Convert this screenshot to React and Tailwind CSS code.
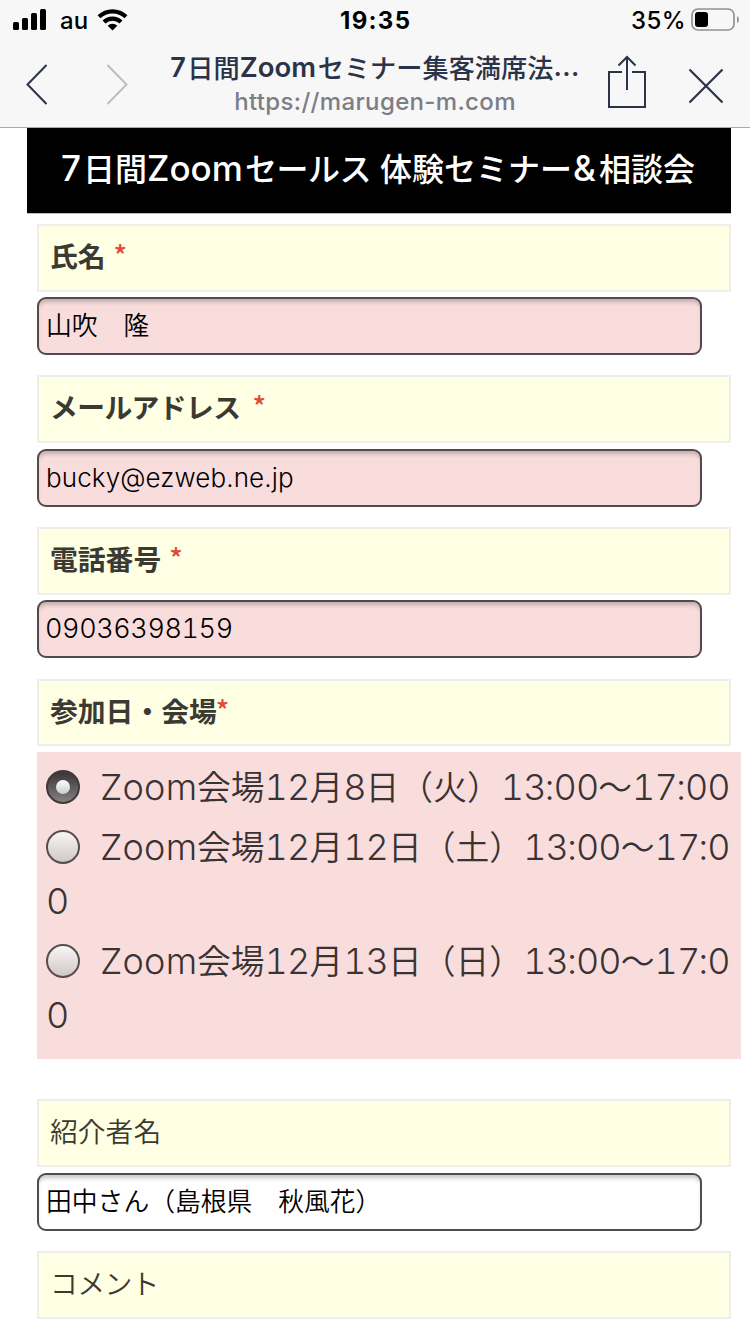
import React from "react";

const JP = "font-['Noto_Sans_CJK_JP',sans-serif]";
const LATIN = "font-['Inter','Noto_Sans_CJK_JP',sans-serif]";

function StatusBar() {
  return (
    <div className={`flex h-10 items-center ${LATIN} text-black`}>
      <svg className="ml-3 h-[22px] w-[36px] shrink-0" viewBox="0 0 36 22">
        <rect x="1" y="13" width="6" height="8" rx="1.5" />
        <rect x="10" y="9" width="6" height="12" rx="1.5" />
        <rect x="19" y="4" width="6" height="17" rx="1.5" />
        <rect x="28" y="0" width="6" height="21" rx="1.5" />
      </svg>
      <span className="ml-[12px] w-[37px] pt-px text-[24px] leading-none font-medium">au</span>
      <svg className="h-[24px] w-[31px] shrink-0" viewBox="0 0 31 24" fill="none" stroke="#000" strokeWidth="4.2">
        <path d="M2 8.8A19.5 19.5 0 0 1 29 8.8" />
        <path d="M7 14A12.3 12.3 0 0 1 24 14" />
        <path d="M15.500 22.500l-4.800-4.800a6.800 6.800 0 0 1 9.600 0z" fill="#000" stroke="none" />
      </svg>
      <span className="ml-[212px] w-[71px] pt-[2px] text-[24px] leading-none font-bold tracking-[1.3px] whitespace-nowrap">19:35</span>
      <span className="ml-[220px] w-[54px] pt-[2px] text-[24px] leading-none font-medium tracking-[0.4px] whitespace-nowrap">35%</span>
      <svg className="ml-[6px] h-[24px] w-[49px] shrink-0" viewBox="0 0 49 24">
        <rect x="1" y="1" width="42" height="21" rx="6" fill="none" stroke="#929292" strokeWidth="1.700" />
        <rect x="4" y="4" width="13" height="15" rx="3" />
        <path d="M46 8q2 1 2 3.500t-2 3.500z" fill="#929292" />
      </svg>
    </div>
  );
}

function NavBar() {
  return (
    <div className="flex h-[87px] items-start">
      <svg className="mt-[22px] ml-[25px] h-[45px] w-[24px]" viewBox="0 0 24 45" fill="none" stroke="#2b3348" strokeWidth="2">
        <path d="M21.500 3L2.500 22.500L21.500 42" />
      </svg>
      <svg className="mt-[22px] ml-[56px] h-[45px] w-[24px]" viewBox="0 0 24 45" fill="none" stroke="#bdbec3" strokeWidth="2">
        <path d="M2.500 3L21.500 22.500L2.500 42" />
      </svg>
      <div className="ml-[40px] flex w-[412px] flex-col items-center pt-[10px] whitespace-nowrap">
        <div className={`flex h-[34px] items-center text-[26.2px] leading-none font-medium text-[#2b3348] ${JP}`}>
          <span className={`${LATIN} w-[17px] pt-px text-[27px] font-semibold`}>7</span>日間
          <span className={`${LATIN} w-[78px] pt-px text-[27.5px] font-semibold`}>Zoom</span>セミナー集客満席法
          <span className={`${LATIN} pt-px font-semibold tracking-[0.4px]`}>...</span>
        </div>
        <div className={`flex h-[36px] items-center text-[24px] leading-none font-medium tracking-[0.35px] text-[#7c7e85] ${LATIN}`}>
          https://marugen-m.com
        </div>
      </div>
      <svg className="mt-[15px] ml-[26px] h-[56px] w-[40px]" viewBox="0 0 40 56" fill="none" stroke="#2b3348" strokeWidth="2">
        <path d="M15 17H2V52H38V17H25M20 35V2M11.500 10.500L20 2L28.500 10.500" />
      </svg>
      <svg className="mt-[28px] ml-[41px] h-[36px] w-[36px]" viewBox="0 0 36 36" fill="none" stroke="#2b3348" strokeWidth="2.200">
        <path d="M1.500 1.500L34.500 34.500M34.500 1.500L1.500 34.500" />
      </svg>
    </div>
  );
}

function Label({ children, className = "" }) {
  return (
    <div className={`ml-[37px] flex w-[694px] shrink-0 items-center border-2 border-[#eeeeee] bg-[#ffffe3] pb-[4px] pl-[11px] text-[27.800px] leading-none whitespace-nowrap text-[#3a3a32] ${JP} ${className}`}>
      {children}
    </div>
  );
}

function Star({ className = "" }) {
  return <span className={`${JP} pb-[2px] font-medium tracking-normal text-[#e04a38] ${className}`}>*</span>;
}

function Field({ children, className = "" }) {
  return (
    <div className={`ml-[37px] flex h-[58px] w-[665px] shrink-0 items-center rounded-[9px] border-2 border-[#524a4c] pb-[4px] pl-[7px] text-[25.8px] leading-none font-[350] whitespace-pre text-black shadow-[inset_0_5px_4px_-2px_rgba(0,0,0,0.22)] ${JP} ${className}`}>
      {children}
    </div>
  );
}

function Radio({ checked }) {
  return checked ? (
    <span className="flex size-[34px] shrink-0 items-center justify-center rounded-full border-2 border-[#403a3b] bg-gradient-to-b from-[#3a3637] to-[#858182]">
      <span className="size-[14px] rounded-full bg-gradient-to-b from-white to-[#cccccc]" />
    </span>
  ) : (
    <span className="size-[34px] shrink-0 rounded-full border-2 border-[#554d4e] bg-gradient-to-b from-[#faf6f6] to-[#d0c7c8]" />
  );
}

function Run({ className = "", children }) {
  return <span className={`inline-block ${LATIN} text-[36px] font-[330] ${className}`}>{children}</span>;
}

function Digits({ value }) {
  return value.split("").map((c, i) => (
    <Run key={i} className={c === ":" ? "w-[8px] text-center indent-[-1px]" : "w-[22.4px] text-center tabular-nums"}>
      {c}
    </Run>
  ));
}

function Option({ day, week, end, rest, checked, className = "" }) {
  return (
    <div className={className}>
      <div className="flex h-[54px] items-center">
        <Radio checked={checked} />
        <span className="ml-[20px] flex items-baseline pb-px whitespace-nowrap">
          <Run className="w-[97px] tracking-[0.2px]">Zoom</Run>会場
          <Digits value="12" />月
          <Digits value={day} />日（{week}）
          <Digits value="13:00" />～
          <Digits value={end} />
        </span>
      </div>
      {rest && (
        <div className="flex h-[54px] items-center pb-px">
          <Digits value={rest} />
        </div>
      )}
    </div>
  );
}

export default function App() {
  return (
    <div lang="ja" className="flex h-[1334px] w-[750px] flex-col overflow-hidden bg-white">
      <header className="h-[128px] shrink-0 border-b border-[#a9a9a9] bg-[#f7f7f7]">
        <StatusBar />
        <NavBar />
      </header>

      <h1 className={`ml-[27px] flex h-[86px] w-[704px] shrink-0 items-center border-b border-[#bbbbbb] bg-black pb-[4px] pl-[34px] text-[32px] leading-none font-medium whitespace-pre text-white ${JP}`}>
        <span className="flex items-baseline">
          <span className={`${LATIN} w-[22px] text-[35px]`}>7</span>日間
          <span className={`${LATIN} w-[98px] text-[35px]`}>Zoom</span>
          <span className="tracking-[-0.5px]">セールス</span>
          <span className="ml-[9px]">体験セミナー</span>
          <span className={`${LATIN} w-[27px] pl-px text-[35px]`}>&amp;</span>相談会
        </span>
      </h1>

      <Label className="mt-[10px] h-[68px] font-bold">氏名<Star className="ml-[8px]" /></Label>
      <Field className="mt-[5px] bg-[#f9dddd]">山吹　隆</Field>

      <Label className="mt-[20px] h-[68px] font-bold tracking-[-0.6px]">メールアドレス<Star className="ml-[12px]" /></Label>
      <Field className="mt-[6px] bg-[#f9dddd]">
        <span className={`${LATIN} pt-[3px] text-[26px] font-light tracking-[0.1px]`}>bucky@ezweb.ne.jp</span>
      </Field>

      <Label className="mt-[20px] h-[68px] font-bold">電話番号<Star className="ml-[8px]" /></Label>
      <Field className="mt-[5px] bg-[#f9dddd]">
        <span className={`${LATIN} -ml-px pt-[3px] text-[27px] font-light tracking-[-0.4px] tabular-nums`}>09036398159</span>
      </Field>

      <Label className="mt-[21px] h-[67px] font-bold">参加日・会場<Star className="-ml-px" /></Label>
      <div className={`mt-[6px] ml-[37px] h-[307px] w-[704px] shrink-0 bg-[#f9dddd] pt-[8px] pl-[9px] text-[33.8px] leading-none font-[350] text-[#3a3334] ${JP}`}>
        <Option day="8" week="火" end="17:00" checked />
        <Option className="mt-[6px]" day="12" week="土" end="17:0" rest="0" />
        <Option className="mt-[6px]" day="13" week="日" end="17:0" rest="0" />
      </div>

      <Label className="mt-[40px] h-[68px] font-[350]">紹介者名</Label>
      <Field className="mt-[6px] bg-white">田中さん（島根県　秋風花）</Field>

      <Label className="mt-[20px] h-[68px] font-[350] tracking-[-0.6px]">コメント</Label>
    </div>
  );
}
